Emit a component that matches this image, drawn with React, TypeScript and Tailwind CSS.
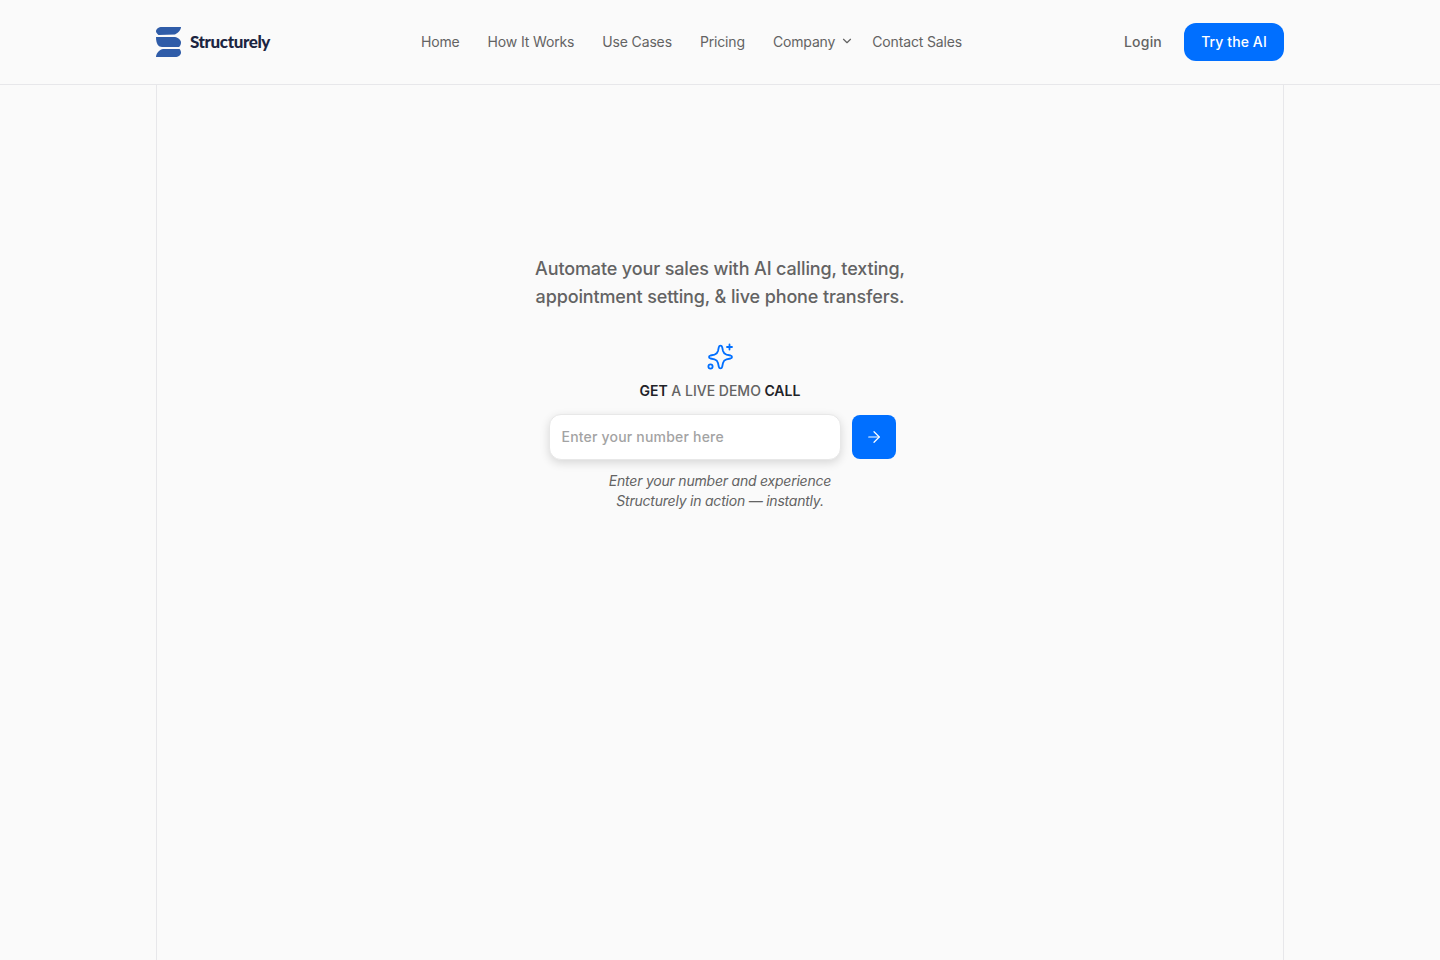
import { ArrowRight, ChevronDown } from 'lucide-react';

const navLinks = ['Home', 'How It Works', 'Use Cases', 'Pricing'];

function Logo() {
  return (
    <a className="flex items-center gap-[9px]">
      <svg width="25" height="30" viewBox="0 0 25 30" fill="#2f5ca8">
        <path d="M6 0H25C25 1 24.5 3 23 4.5C21.5 6 20.5 6.5 19 7.5L2.5 8C1 6.5 0 5.5 0 4.5C0 2 2.5 0 6 0Z" />
        <path d="M0 10H19C22 10.5 25 13 25 15.5C25 17.5 24 19 23 20H6C2.5 20 0 17 0 10Z" />
        <path d="M7 22H23.5C24.5 23 25 24.5 25 25.5C25 28 22.5 30 19 30H0C0 28 1 26 2.5 24.5C4 23 5.5 22 7 22Z" />
      </svg>
      <span className="font-['Lato',sans-serif] text-[17px] font-black tracking-[-0.4px] text-[#1c2541]">
        Structurely
      </span>
    </a>
  );
}

function Header() {
  return (
    <header className="h-[85px] border-b border-[#e7e7ea]">
      <div className="mx-auto flex h-full w-[1128px] items-center justify-between">
        <Logo />
        <nav className="mr-[11px] flex items-center gap-7 pb-[2px] text-[14px] tracking-[-0.15px] text-[#636363]">
          {navLinks.map((link) => (
            <a key={link}>{link}</a>
          ))}
          <div className="flex items-center gap-[5px]">
            <a>Company</a>
            <ChevronDown className="-mr-[7px] h-[14px] w-[14px]" />
          </div>
          <a className="-ml-[3px]">Contact Sales</a>
        </nav>
        <div className="flex items-center gap-[22px]">
          <a className="pb-[2px] text-[14px] font-medium tracking-[0.2px] text-[#636363]">Login</a>
          <button className="h-[38px] w-[100px] rounded-[12px] bg-[#006fff] pb-[2px] text-[14px] font-medium tracking-[0.1px] text-white">
            Try the AI
          </button>
        </div>
      </div>
    </header>
  );
}

function DemoForm() {
  return (
    <div className="mt-[32px] flex flex-col items-center">
      <svg width="28" height="28" viewBox="0 0 28 28" fill="none" stroke="#006fff" strokeWidth="1.8" strokeLinecap="round" strokeLinejoin="round">
        <path d="M12.8 4.2C13.3 2 15.7 2 16.2 4.2L17 8C17.5 10 18.5 11 20.5 11.6L24.5 12.5C26.5 13 26.5 15 24.5 15.5L20.5 16.4C18.5 17 17.5 18 17 20L16.2 23.8C15.7 26 13.3 26 12.8 23.8L12 20C11.5 18 10.5 17 8.5 16.4L4.5 15.5C2.5 15 2.5 13 4.5 12.5L8.5 11.6C10.5 11 11.5 10 12 8Z" />
        <path d="M23.5 1.5V6.5M21 4H26" />
        <circle cx="4.5" cy="23.5" r="2.1" />
      </svg>
      <p className="mt-[10px] text-[14px] font-semibold leading-5 text-[#1f2328]">
        GET <span className="font-medium text-[#636363]">A LIVE DEMO</span> CALL
      </p>
      <div className="ml-[4px] mt-[13px] flex items-center gap-[11px]">
        <input
          placeholder="Enter your number here"
          className="h-[46px] w-[292px] rounded-[12px] border border-[#e8e8e8] bg-white px-3 pb-[2px] text-[14px] font-medium tracking-[0.2px] shadow-[0_3px_10px_rgba(0,0,0,0.14)] outline-none placeholder:text-[#a3a3a3]"
        />
        <button className="flex h-[44px] w-[44px] items-center justify-center rounded-[8px] bg-[#006fff] text-white">
          <ArrowRight className="h-[18px] w-[18px]" strokeWidth={1.6} />
        </button>
      </div>
      <p className="mt-[11px] text-center text-[14px] italic leading-5 tracking-[-0.22px] text-[#636363]">
        Enter your number and experience
        <br />
        Structurely in action — instantly.
      </p>
    </div>
  );
}

export default function App() {
  return (
    <div className="min-h-[960px] bg-[#fafafa] font-['Inter',sans-serif]">
      <Header />
      <main className="mx-auto flex h-[875px] w-[1128px] flex-col items-center border-x border-[#e7e7ea] pt-[170px]">
        <h2 className="text-center text-[18px] font-medium leading-7 tracking-[-0.13px] text-[#636363]">
          Automate your sales with AI calling, texting,
          <br />
          appointment setting, &amp; live phone transfers.
        </h2>
        <DemoForm />
      </main>
    </div>
  );
}
